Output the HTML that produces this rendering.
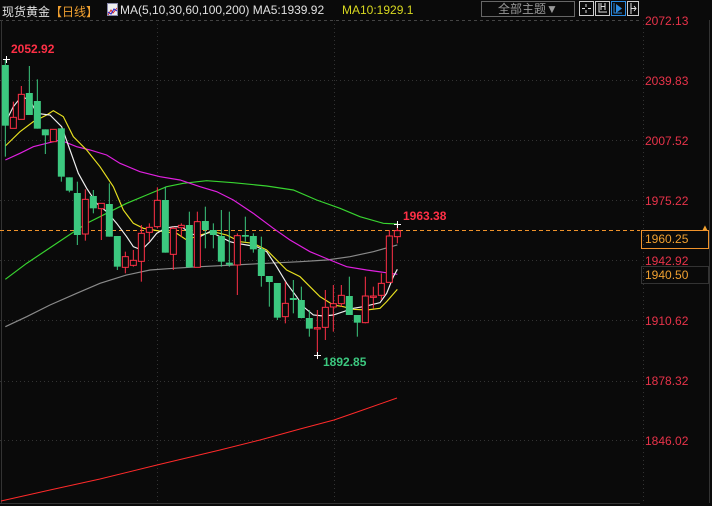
<!DOCTYPE html><html><head><meta charset="utf-8"><style>
body{margin:0;background:#0a0a0a;width:712px;height:506px;overflow:hidden;font-family:"Liberation Sans","Noto Sans CJK SC",sans-serif;}
.t{position:absolute;font-size:12px;white-space:nowrap}
.p{position:absolute;color:#e8334a;font-size:12px;left:645px}
.ic{position:absolute;top:1px;width:13px;height:13px;border:1px solid #ccc}
</style></head><body>
<svg width="712" height="506" style="position:absolute;left:0;top:0">
<g stroke="#333" stroke-dasharray="1,3" stroke-width="1">
<line x1="0" y1="20.5" x2="640" y2="20.5" stroke="#444" stroke-dasharray="3,3"/>
<line x1="0" y1="80.5" x2="640" y2="80.5"/>
<line x1="0" y1="140.5" x2="640" y2="140.5"/>
<line x1="0" y1="200.5" x2="640" y2="200.5"/>
<line x1="0" y1="260.5" x2="640" y2="260.5"/>
<line x1="0" y1="320.5" x2="640" y2="320.5"/>
<line x1="0" y1="381.5" x2="640" y2="381.5"/>
<line x1="0" y1="440.5" x2="640" y2="440.5"/>
<line x1="157.5" y1="20" x2="157.5" y2="503"/>
<line x1="334.5" y1="20" x2="334.5" y2="503"/>
<line x1="643.5" y1="20" x2="643.5" y2="503"/>
</g>
<line x1="1.5" y1="20" x2="1.5" y2="503" stroke="#333"/>
<line x1="0" y1="503.5" x2="640" y2="503.5" stroke="#333"/>
<line x1="709.5" y1="20" x2="709.5" y2="503" stroke="#333"/>
<line x1="0" y1="230.5" x2="640" y2="230.5" stroke="#f0932b" stroke-dasharray="4,3"/>
<polyline fill="none" stroke="#ff2a2a" stroke-width="1" points="1,501 50,490 100,479 157,465 220,450 260,440 300,429 334,420 360,411 397,398"/>
<g transform="translate(0,60) scale(0.33333)" stroke-width="3">
<g fill="none" stroke-width="3.5">
<polyline stroke="#8a8a8a" points="16,800 80,770 150,735 230,700 300,670 380,645 450,630 520,625 600,620 700,615 800,610 900,605 980,600 1050,590 1120,575 1192,555"/>
<polyline stroke="#38d430" points="16,658 80,610 140,570 200,530 260,490 320,460 380,430 440,405 500,380 550,370 620,362 700,368 800,378 880,390 950,420 1020,445 1080,470 1150,490 1192,492"/>
<polyline stroke="#e020e0" points="16,300 60,280 100,260 140,250 180,240 230,260 270,270 320,285 360,310 420,335 480,350 540,360 600,380 650,395 700,420 760,460 820,505 870,540 930,575 990,600 1040,620 1100,630 1150,637 1192,643"/>
<polyline stroke="#e8e020" points="16,258 60,215 100,185 140,165 160,152 190,170 220,230 260,270 300,320 340,380 370,450 400,490 430,505 460,510 490,515 530,520 560,540 600,525 640,515 680,525 720,545 760,550 800,570 830,600 860,630 900,650 930,680 960,710 1000,735 1030,740 1060,748 1100,750 1140,745 1160,725 1192,688"/>
<polyline stroke="#f0f0f0" points="20,180 40,140 64,110 90,120 110,160 150,165 185,200 210,270 235,340 260,385 290,430 320,455 350,490 380,530 400,560 425,570 450,545 470,520 495,505 520,500 545,500 570,520 600,530 630,515 660,530 690,545 710,550 740,555 770,560 800,575 830,620 860,670 890,710 910,740 940,765 970,768 1000,765 1030,755 1060,745 1090,740 1140,728 1160,700 1180,650 1192,628"/>
</g>
<g id="c"></g>
</g>
<g stroke="#fff" stroke-width="1"><line x1="3" y1="59.5" x2="10" y2="59.5"/><line x1="6.5" y1="56" x2="6.5" y2="63"/>
<line x1="314" y1="355.5" x2="321" y2="355.5"/><line x1="317.5" y1="352" x2="317.5" y2="359"/>
<line x1="394" y1="224.5" x2="401" y2="224.5"/><line x1="397.5" y1="221" x2="397.5" y2="228"/></g>
<g stroke="#ddd" stroke-width="1" fill="none">
<path d="M586 4v3M586 10v3M582 8.5h3M588 8.5h3"/>
<path d="M599 3v9h8M601 3v7M605 3v7M601 6.5h4"/>
<path d="M631 3v11M631 8.5h5M634 6l2 2.5-2 2.5"/>
</g>
<g stroke="#2a8ae0" fill="#2a8ae0"><path d="M614 3v10h8" fill="none"/><path d="M616 4l6 4.5-6 4.5z" stroke="none"/></g>
</svg>
<script>
var d=[["G",15,197,0,290],["R",172,205,125,205],["R",103,178,78,178],["G",99,165,18,165],["G",123,206,58,206],["G",208,226,208,282],["R",208,245,208,245],["G",205,350,205,365],["G",352,392,352,397],["G",399,525,365,555],["R",418,522,388,542],["G",408,445,390,460],["R",430,446,430,540],["G",432,530,370,530],["G",528,620,528,630],["R",590,622,575,640],["R",601,616,570,620],["R",520,604,495,665],["R",502,517,490,545],["R",421,500,382,505],["G",420,578,380,578],["R",505,583,500,630],["R",496,503,490,530],["G",495,622,455,622],["R",485,622,455,622],["G",483,510,440,565],["G",510,525,490,565],["G",528,605,450,620],["G",608,614,455,620],["R",527,615,520,705],["G",525,530,470,545],["G",528,568,520,578],["G",567,648,530,680],["G",648,666,648,740],["G",669,773,669,780],["R",730,770,665,790],["G",714,720,660,760],["G",720,774,680,775],["G",774,806,750,830],["R",803,805,750,888],["R",742,802,690,840],["R",731,741,675,815],["R",706,731,675,740],["G",708,765,650,765],["G",765,788,765,830],["R",708,788,650,790],["R",708,712,680,745],["R",670,706,640,720],["R",528,667,510,667],["R",512,530,490,550]];
var s="";d.forEach(function(c,i){var x=16+24*i,col=c[0]=="G"?"#3cc87f":"#ff3046";s+='<line x1="'+x+'" y1="'+c[3]+'" x2="'+x+'" y2="'+c[4]+'" stroke="'+col+'"/>';var h=Math.max(c[2]-c[1],4);if(c[0]=="G")s+='<rect x="'+(x-10.5)+'" y="'+c[1]+'" width="21" height="'+h+'" fill="'+col+'"/>';else s+='<rect x="'+(x-9)+'" y="'+c[1]+'" width="18" height="'+h+'" fill="#0a0a0a" stroke="'+col+'" stroke-width="3"/>';});
document.getElementById("c").innerHTML=s;
</script>
<div class="t" style="left:2px;top:3px;color:#e0e0e0">现货黄金<span style="color:#f0a030">【日线】</span></div>
<div style="position:absolute;left:107px;top:3px;width:9px;height:11px;background:#eee;border:1px solid #88a"><svg width="9" height="11"><polyline points="0,9 3,4 5,7 9,2" fill="none" stroke="#d22" stroke-width="1"/><polyline points="0,6 3,8 6,3 9,5" fill="none" stroke="#22c" stroke-width="1"/></svg></div>
<div class="t" style="left:120px;top:3px;color:#e0e0e0">MA(5,10,30,60,100,200) MA5:1939.92</div>
<div class="t" style="left:342px;top:3px;color:#d8d820">MA10:1929.1</div>
<div style="position:absolute;left:481px;top:1px;width:92px;height:14px;border:1px solid #666;color:#999;font-size:12px;line-height:14px;text-align:center">全部主题▼</div>
<div class="ic" style="left:579px"></div>
<div class="ic" style="left:595px"></div>
<div class="ic" style="left:611px;border-color:#2a8ae0"></div>
<div class="ic" style="left:627px;width:10px"></div>
<div class="p" style="top:14px">2072.13</div>
<div class="p" style="top:74px">2039.83</div>
<div class="p" style="top:134px">2007.52</div>
<div class="p" style="top:194px">1975.22</div>
<div class="p" style="top:254px">1942.92</div>
<div class="p" style="top:314px">1910.62</div>
<div class="p" style="top:374px">1878.32</div>
<div class="p" style="top:434px">1846.02</div>
<div style="position:absolute;left:641px;top:230px;border:1px solid #f0932b;color:#f0a030;font-size:12px;line-height:17px;padding-left:3px;box-sizing:border-box;width:68px;height:19px">1960.25</div>
<div style="position:absolute;left:641px;top:266px;width:68px;height:18px;border:1px solid #333;color:#f0a030;font-size:12px;line-height:17px;padding-left:3px;box-sizing:border-box">1940.50</div>
<div style="position:absolute;left:701px;top:223px;color:#f0a030;font-size:8px">▲</div>
<div class="t" style="left:11px;top:42px;color:#ff3046;font-weight:bold">2052.92</div>
<div class="t" style="left:403px;top:209px;color:#ff3046;font-weight:bold">1963.38</div>
<div class="t" style="left:323px;top:355px;color:#3cc87f;font-weight:bold">1892.85</div>
</body></html>
